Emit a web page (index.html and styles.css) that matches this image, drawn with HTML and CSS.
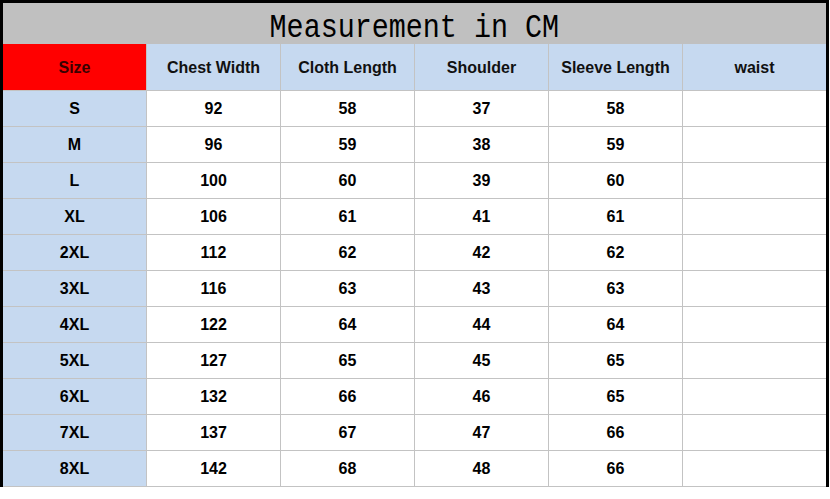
FILE: index.html
```html
<!DOCTYPE html>
<html lang="en">
<head>
<meta charset="utf-8">
<title>Measurement in CM</title>
<link rel="stylesheet" href="styles.css">
</head>
<body>
<div class="sheet">
  <div class="title"><span class="title-text">Measurement in CM</span></div>
  <div class="grid">
    <div class="cell head size-head">Size</div>
    <div class="cell head">Chest Width</div>
    <div class="cell head">Cloth Length</div>
    <div class="cell head">Shoulder</div>
    <div class="cell head">Sleeve Length</div>
    <div class="cell head">waist</div>

    <div class="cell size">S</div><div class="cell">92</div><div class="cell">58</div><div class="cell">37</div><div class="cell">58</div><div class="cell"></div>
    <div class="cell size">M</div><div class="cell">96</div><div class="cell">59</div><div class="cell">38</div><div class="cell">59</div><div class="cell"></div>
    <div class="cell size">L</div><div class="cell">100</div><div class="cell">60</div><div class="cell">39</div><div class="cell">60</div><div class="cell"></div>
    <div class="cell size">XL</div><div class="cell">106</div><div class="cell">61</div><div class="cell">41</div><div class="cell">61</div><div class="cell"></div>
    <div class="cell size">2XL</div><div class="cell">112</div><div class="cell">62</div><div class="cell">42</div><div class="cell">62</div><div class="cell"></div>
    <div class="cell size">3XL</div><div class="cell">116</div><div class="cell">63</div><div class="cell">43</div><div class="cell">63</div><div class="cell"></div>
    <div class="cell size">4XL</div><div class="cell">122</div><div class="cell">64</div><div class="cell">44</div><div class="cell">64</div><div class="cell"></div>
    <div class="cell size">5XL</div><div class="cell">127</div><div class="cell">65</div><div class="cell">45</div><div class="cell">65</div><div class="cell"></div>
    <div class="cell size">6XL</div><div class="cell">132</div><div class="cell">66</div><div class="cell">46</div><div class="cell">65</div><div class="cell"></div>
    <div class="cell size">7XL</div><div class="cell">137</div><div class="cell">67</div><div class="cell">47</div><div class="cell">66</div><div class="cell"></div>
    <div class="cell size">8XL</div><div class="cell">142</div><div class="cell">68</div><div class="cell">48</div><div class="cell">66</div><div class="cell"></div>
  </div>
</div>
</body>
</html>
```

FILE: styles.css
```css
html, body {
  margin: 0;
  padding: 0;
  background: #ffffff;
}

.sheet {
  width: 823px;
  border-top: 3px solid #000;
  border-left: 3px solid #000;
  border-right: 3px solid #000;
}

.title {
  height: 41px;
  background: #c0c0c0;
  display: flex;
  align-items: center;
  justify-content: center;
}

.title-text {
  display: inline-block;
  font-family: "Liberation Mono", "DejaVu Sans Mono", monospace;
  font-size: 33px;
  line-height: 41px;
  color: #000;
  transform: scaleX(0.86);
  margin-top: 10px;
}

.grid {
  display: grid;
  grid-template-columns: 143px 133px 133px 133px 133px 143px;
  grid-template-rows: 46px;
  grid-auto-rows: 35px;
  gap: 1px;
  padding-bottom: 1px;
  background: #c3c3c3;
}

.cell {
  background: #ffffff;
  display: flex;
  align-items: center;
  justify-content: center;
  font-family: "Liberation Sans", Arial, sans-serif;
  font-weight: bold;
  font-size: 16px;
  color: #000;
}

.head {
  background: #c6d9f0;
  color: #111;
  padding-top: 2px;
}

.size-head {
  background: #ff0000;
  color: #3a0000;
}

.size {
  background: #c6d9f0;
}
```
